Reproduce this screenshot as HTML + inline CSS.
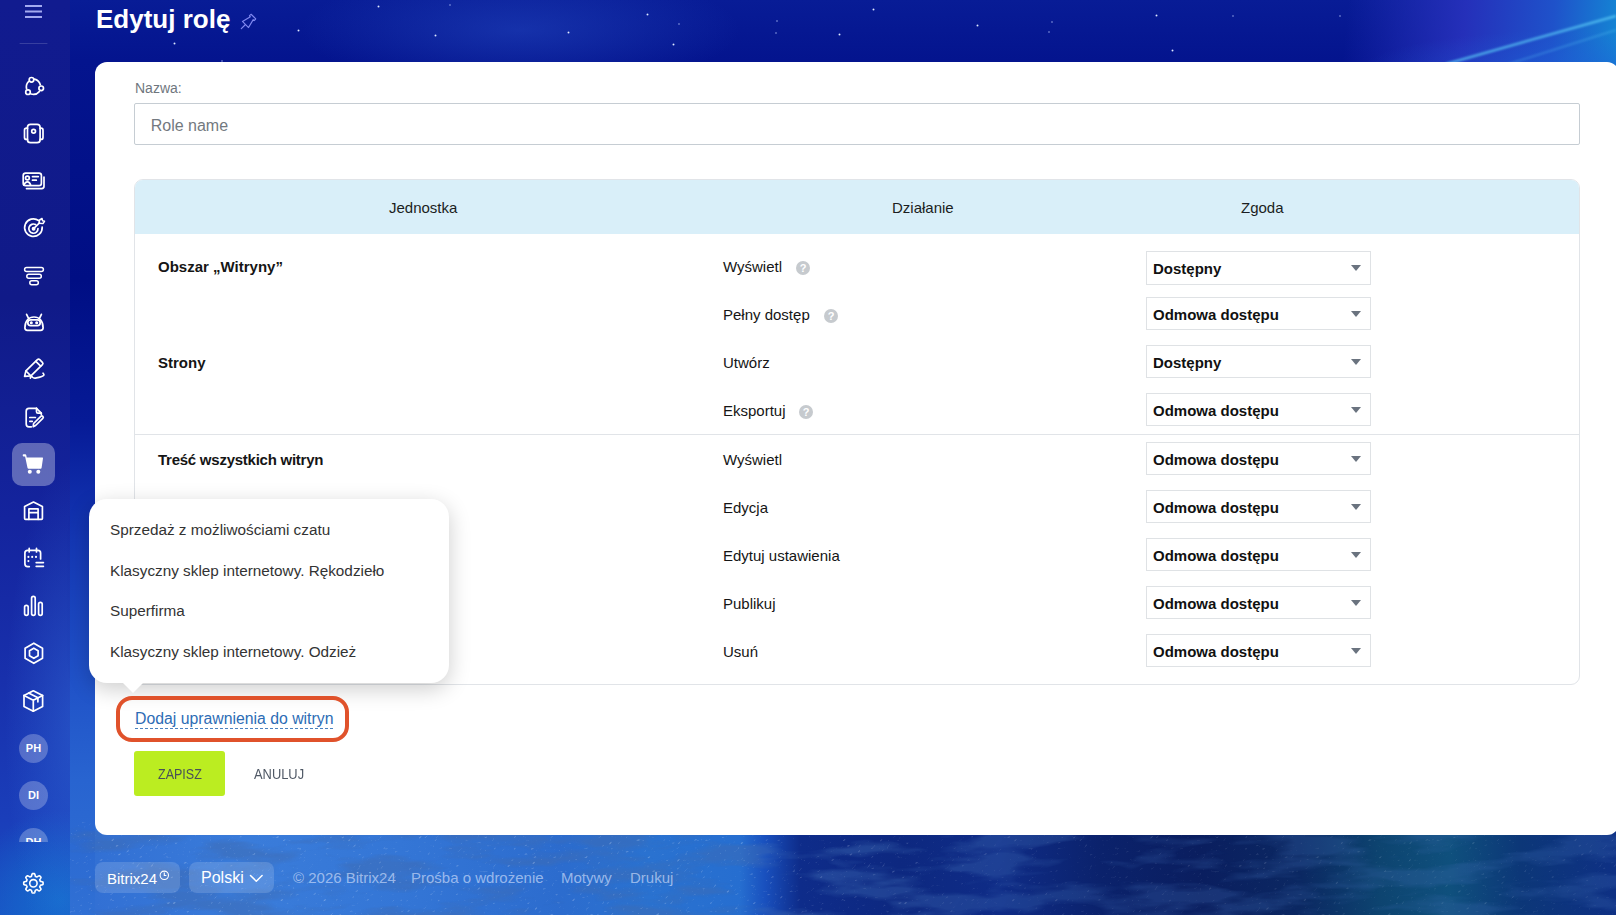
<!DOCTYPE html>
<html lang="pl">
<head>
<meta charset="utf-8">
<title>Edytuj rolę</title>
<style>
*{box-sizing:border-box;margin:0;padding:0}
html,body{width:1616px;height:915px;overflow:hidden}
body{position:relative;font-family:"Liberation Sans",sans-serif;background:#0b168c;color:#151515}
.abs{position:absolute}
#bg{position:absolute;left:0;top:0;width:1616px;height:915px;
background:
 radial-gradient(ellipse 220px 60px at 520px 30px, rgba(40,80,200,.45), rgba(40,80,200,0)),
 linear-gradient(to bottom, rgb(8,28,150) 0px, rgb(4,20,142) 60px, rgb(0,14,132) 280px, rgb(6,26,150) 420px, rgb(20,55,180) 540px, rgb(30,78,198) 660px, rgb(40,100,208) 780px, rgb(48,112,212) 915px);
}
#tr{position:absolute;left:1200px;top:0;width:416px;height:80px;
background:
 radial-gradient(ellipse 220px 40px at 380px 70px, rgba(30,95,215,.55), rgba(30,95,215,0)),
 linear-gradient(95deg, rgba(15,25,150,0) 0%, rgba(15,25,150,0) 35%, rgba(40,50,190,.9) 63%, rgba(32,85,205,.95) 84%, rgba(20,135,212,1) 100%)}
#bot{position:absolute;left:95px;top:822px;width:1521px;height:93px;
background:linear-gradient(90deg, rgb(50, 112, 212) 0px, rgb(58, 124, 218) 155px, rgb(52, 118, 214) 305px, rgb(44, 108, 206) 465px, rgb(42, 114, 208) 555px, rgb(38, 110, 208) 645px, rgb(25, 80, 190) 670px, rgb(14, 44, 138) 705px, rgb(13, 40, 128) 805px, rgb(15, 44, 135) 905px, rgb(11, 34, 108) 1005px, rgb(10, 30, 95) 1105px, rgb(11, 40, 98) 1205px, rgb(13, 68, 112) 1285px, rgb(15, 80, 125) 1355px, rgb(12, 55, 120) 1425px, rgb(14, 48, 132) 1521px)}
#side{position:absolute;left:0;top:0;width:70px;height:915px;
background:
 radial-gradient(ellipse 70px 260px at 75px 720px, rgba(55,120,225,.4), rgba(55,120,225,0)),
 radial-gradient(ellipse 90px 90px at 60px 900px, rgba(20,120,210,.7), rgba(20,120,210,0)),
 linear-gradient(to bottom, rgb(17,27,143) 0px, rgb(16,26,136) 300px, rgb(20,36,158) 520px, rgb(24,48,172) 680px, rgb(26,62,186) 820px, rgb(25,80,195) 915px)}
.star{position:absolute;width:3px;height:3px;border-radius:50%;background:radial-gradient(circle,rgba(240,245,255,.95) 0,rgba(200,215,255,.5) 45%,rgba(200,215,255,0) 75%)}
.star.s{width:2px;height:2px;background:rgba(190,205,255,.45)}
.ico{position:absolute;left:23px;width:22px;height:22px}
.ico svg{width:22px;height:22px;display:block;overflow:visible}
.av{position:absolute;left:19px;width:29px;height:29px;border-radius:50%;background:rgba(255,255,255,.25);color:#fff;font-weight:700;font-size:11px;text-align:center;line-height:29px}
#title{position:absolute;left:96px;top:1.5px;font-size:26px;font-weight:700;color:#fff;line-height:34px;letter-spacing:0}
#card{position:absolute;left:95px;top:62px;width:1524px;height:773px;background:#fff;border-radius:12px}
.lbl{position:absolute;font-size:14px;color:#6f767e;line-height:16px}
#inp{position:absolute;left:134px;top:103px;width:1446px;height:42px;border:1px solid #c6cdd3;border-radius:2px;background:#fff}
#inp span{position:absolute;left:15.7px;top:11.8px;font-size:16px;color:#737980;line-height:20px}
#tbl{position:absolute;left:134px;top:179px;width:1446px;height:506px;border:1px solid #e1e4e8;border-radius:9px;overflow:hidden}
#thead{position:absolute;left:0;top:0;width:100%;height:54px;background:#d9eff9}
.th{position:absolute;top:19px;font-size:15px;color:#1b1e22;line-height:18px}
.unit{position:absolute;font-size:15px;font-weight:700;color:#151515;line-height:18px}
.act{position:absolute;font-size:15px;color:#151515;line-height:18px}
.help{position:absolute;width:14px;height:14px;border-radius:50%;background:#c6cace;color:#fff;font-size:11px;font-weight:700;text-align:center;line-height:15px;margin-top:.5px}
.sel{position:absolute;left:1146px;width:225px;height:33px;border:1px solid #dfe2e5;background:#fff}
.sel span{position:absolute;left:6px;top:8px;font-size:15px;font-weight:700;color:#111;line-height:18px}
.sel i{position:absolute;right:9px;top:13px;width:0;height:0;border-left:5.5px solid transparent;border-right:5.5px solid transparent;border-top:6px solid #6a737f}
#pop{position:absolute;left:89px;top:499px;width:360px;height:184px;background:#fff;border-radius:18px;box-shadow:0 6px 22px rgba(0,0,0,.2)}
.pi{position:absolute;left:21px;font-size:15.3px;color:#333;line-height:18px}
#arrow{position:absolute;left:122px;top:682px;width:0;height:0;border-left:11px solid transparent;border-right:11px solid transparent;border-top:11px solid #fff}
#red{position:absolute;left:116px;top:696px;width:233px;height:46px;border:4px solid #e0522b;border-radius:16px}
#link{position:absolute;left:135px;top:709px;font-size:15.8px;color:#2d6cb5;line-height:19px;border-bottom:1px dashed #4a82c0;padding-bottom:0}
#save{position:absolute;left:134px;top:751px;width:91px;height:45px;background:#bbed21;border-radius:3px;color:#4a5058}
#save span{position:absolute;left:24px;top:14px;font-size:14px;line-height:18px;transform:scaleX(.895);transform-origin:0 0;white-space:nowrap}
#cancel{position:absolute;left:254px;top:765px;font-size:14px;color:#4f5865;line-height:18px;transform:scaleX(.92);transform-origin:0 0;white-space:nowrap}
.fbtn{position:absolute;top:862px;height:31px;border-radius:8px;background:rgba(255,255,255,.15);color:#fff}
.flink{position:absolute;top:869px;font-size:15px;color:rgba(220,230,255,.62);line-height:18px}
</style>
</head>
<body>
<div id="bg"></div>
<div id="tr"></div>
<svg class="abs" style="left:1250px;top:0" width="366" height="80" viewBox="0 0 366 80"><defs><filter id="bl" x="-20%" y="-50%" width="140%" height="200%"><feGaussianBlur stdDeviation="1.2"/></filter></defs>
<path d="M196 64L366 16" stroke="rgba(90,200,245,.75)" stroke-width="2.4" filter="url(#bl)"/>
<path d="M240 70L366 30" stroke="rgba(90,200,245,.3)" stroke-width="2" filter="url(#bl)"/>
</svg>
<div id="bot"></div>
<svg class="abs" style="left:70px;top:822px" width="1546" height="93" viewBox="0 0 1546 93">
 <defs>
  <filter id="tx" x="0" y="0" width="100%" height="100%">
   <feTurbulence type="fractalNoise" baseFrequency="0.01 0.045" numOctaves="4" seed="7" result="n"/>
   <feColorMatrix in="n" type="matrix" values="0 0 0 0 0.05  0 0 0 0 0.15  0 0 0 0 0.45  -5 0 0 0 2.75" result="dark"/>
  </filter>
  <filter id="tx2" x="0" y="0" width="100%" height="100%">
   <feTurbulence type="fractalNoise" baseFrequency="0.35 0.35" numOctaves="1" seed="3" result="n"/>
   <feColorMatrix in="n" type="matrix" values="0 0 0 0 0.8  0 0 0 0 0.88  0 0 0 0 1  0 0 0 6 -3.9"/>
  </filter>
  <linearGradient id="txm" x1="0" x2="1" y1="0" y2="0"><stop offset="0" stop-color="#fff" stop-opacity=".9"/><stop offset=".45" stop-color="#fff" stop-opacity=".8"/><stop offset=".6" stop-color="#fff" stop-opacity=".5"/><stop offset="1" stop-color="#fff" stop-opacity=".4"/></linearGradient>
  <mask id="mk" maskUnits="userSpaceOnUse" x="-200" y="0" width="2000" height="93"><rect x="-200" width="2000" height="93" fill="url(#txm)"/></mask>
 </defs>
 <g mask="url(#mk)" transform="skewX(-35)">
  <rect x="0" y="0" width="1700" height="93" filter="url(#tx)" opacity=".6"/>
  <rect x="0" y="0" width="1700" height="93" filter="url(#tx2)" opacity=".35"/>
 </g>
</svg>
<div id="side"></div>
<div class="star" style="left:173px;top:42px"></div>
<div class="star" style="left:297px;top:29px"></div>
<div class="star" style="left:377px;top:5px"></div>
<div class="star s" style="left:449px;top:4px"></div>
<div class="star" style="left:434px;top:34px"></div>
<div class="star" style="left:567px;top:31px"></div>
<div class="star" style="left:646px;top:13px"></div>
<div class="star" style="left:672px;top:43px"></div>
<div class="star s" style="left:678px;top:23px"></div>
<div class="star s" style="left:776px;top:20px"></div>
<div class="star s" style="left:775px;top:32px"></div>
<div class="star" style="left:838px;top:33px"></div>
<div class="star" style="left:872px;top:8px"></div>
<div class="star" style="left:976px;top:24px"></div>
<div class="star s" style="left:1051px;top:21px"></div>
<div class="star s" style="left:1048px;top:31px"></div>
<div class="star" style="left:1155px;top:14px"></div>
<div class="star" style="left:1171px;top:49px"></div>
<div class="star s" style="left:1232px;top:15px"></div>
<div class="star s" style="left:1339px;top:15px"></div>
<div class="star s" style="left:221px;top:60px"></div>

<!-- hamburger -->
<svg class="abs" style="left:0;top:0" width="70" height="915" viewBox="0 0 70 915" fill="none" stroke="#fff" stroke-width="1.7" stroke-linecap="round" stroke-linejoin="round">
 <g stroke="#a3aaf0" stroke-width="2" stroke-linecap="butt"><path d="M25 6.1H42M25 11.5H42M25 17H42"/></g>
 <path d="M20 43.5H47" stroke="rgba(255,255,255,.16)" stroke-width="1"/>
 <!-- 1 dashed circle nodes -->
 <g>
  <path d="M28.6 81.5A8 8 0 0 0 26.6 89"/>
  <path d="M34.5 79.2A8 8 0 0 1 40.3 84.8"/>
  <path d="M39.3 91.6A8 8 0 0 1 31 94"/>
  <circle cx="31.5" cy="79.8" r="2.3"/><circle cx="41.2" cy="88.3" r="2.3"/><circle cx="28" cy="92.2" r="2.3"/>
 </g>
 <!-- 2 phone -->
 <g>
  <rect x="27.5" y="124.3" width="12.6" height="18.4" rx="3"/>
  <path d="M27.5 128.2H26.5Q24.5 128.2 24.5 130.2V137.4Q24.5 139.4 26.5 139.4H27.5"/>
  <path d="M40.1 128.2H41Q43 128.2 43 130.2V137.4Q43 139.4 41 139.4H40.1"/>
  <circle cx="33.6" cy="131.3" r="1.9"/>
 </g>
 <!-- 3 contact card -->
 <g>
  <rect x="23.2" y="173.1" width="18.2" height="12.6" rx="2.4"/>
  <path d="M44 177V186.3Q44 188.6 41.7 188.6H26.5"/>
  <circle cx="27.4" cy="178" r="1.9"/>
  <path d="M24 185Q25 181.8 27.4 181.8Q29.8 181.8 30.6 185"/>
  <path d="M32.5 176.6H38.3M32.5 180.2H36.3"/>
 </g>
 <!-- 4 target -->
 <g>
  <path d="M38.6 220.5A8.8 8.8 0 1 0 42.2 227"/>
  <path d="M35.6 224.6A4.6 4.6 0 1 0 38 228.5"/>
  <circle cx="33.6" cy="228.7" r="1.1" fill="#fff"/>
  <path d="M33.6 228.7L39.5 222.8"/>
  <path d="M39 223.3L39.6 220L42 218.5L42.5 220.7L44.5 221.3L43 223.6Z" stroke-width="1.5"/>
 </g>
 <!-- 5 funnel -->
 <g>
  <rect x="24.6" y="267.6" width="18.8" height="4" rx="2" stroke-width="1.5"/>
  <rect x="26.8" y="274.2" width="14.5" height="4" rx="2" stroke-width="1.5"/>
  <rect x="29.8" y="280.7" width="8.5" height="4" rx="2" stroke-width="1.5"/>
 </g>
 <!-- 6 robot -->
 <g>
  <path d="M24.9 327.8C24.9 320.8 28.8 317 34 317C39.2 317 43.1 320.8 43.1 327.8C43.1 329.5 42.3 330.3 40.6 330.3H27.4C25.7 330.3 24.9 329.5 24.9 327.8Z"/>
  <path d="M28.3 317.9L26.6 314.3M39.7 317.9L41.4 314.3"/>
  <rect x="27.8" y="319.9" width="12.4" height="5.8" rx="2.9"/>
  <circle cx="31.3" cy="322.8" r=".7" fill="#fff"/><circle cx="36.7" cy="322.8" r=".7" fill="#fff"/>
 </g>
 <!-- 7 pen -->
 <g>
  <path d="M24.6 376.4L25.9 370.9L37.4 359.6Q38.6 358.5 39.7 359.6L42.4 362.3Q43.5 363.4 42.4 364.6L30.9 375.9Z"/>
  <path d="M35.8 361.3L40.7 366.2M26 371L30.5 375.6"/>
  <path d="M30.3 378Q31.4 375.8 32.6 377.3Q33.7 378.6 36.4 377.9Q42 377 43.7 375.4Q44.4 374.4 43 373.2"/>
 </g>
 <!-- 8 doc pen -->
 <g>
  <path d="M36.5 408.4H29Q26.2 408.4 26.2 411.2V424Q26.2 426.8 29 426.8H31.3"/>
  <path d="M36.5 408.4L41.3 413.2V414.5"/>
  <path d="M36.5 408.4V411.8Q36.5 413.2 37.9 413.2H41.3"/>
  <path d="M29.8 417.5H35.4M29.8 421.3H32.3"/>
  <path d="M33.2 426.7L33.6 423.5L40.8 416.3Q41.8 415.3 42.8 416.3Q43.8 417.3 42.8 418.3L35.6 425.5Z"/>
 </g>
 <!-- 9 cart active -->
 <rect x="12" y="443" width="43" height="43" rx="10" fill="rgba(255,255,255,.32)" stroke="none"/>
 <g stroke="none" fill="#fff">
  <path d="M23.5 454.3H25.2Q26.1 454.3 26.3 455.2L26.7 457.5H42.4Q43.2 457.5 43 458.3L41.6 467.8Q41.5 468.7 40.6 468.7H28.6Q27.7 468.7 27.5 467.8L25.1 456.4H23.5Q22.7 456.4 22.7 455.3Q22.7 454.3 23.5 454.3Z"/>
  <circle cx="29.8" cy="471.8" r="2"/><circle cx="38.3" cy="471.8" r="2"/>
 </g>
 <!-- 10 warehouse -->
 <g>
  <path d="M25.5 519.3Q24.6 519.3 24.6 518.4V506.5L33.5 502.1L42.4 506.5V518.4Q42.4 519.3 41.5 519.3Z"/>
  <path d="M28.9 519.3V508.9H38.1V519.3M28.9 512.7H38.1"/>
 </g>
 <!-- 11 calendar -->
 <g>
  <path d="M40.6 559V553Q40.6 550.3 38 550.3H27.6Q24.9 550.3 24.9 553V563.8Q24.9 566.6 27.6 566.6H29.3"/>
  <path d="M29.2 548.3V552M36.5 548.3V552"/>
  <circle cx="28.4" cy="556.9" r="1.05" fill="#fff" stroke="none"/><circle cx="32.2" cy="556.9" r="1.05" fill="#fff" stroke="none"/><circle cx="36" cy="556.9" r="1.05" fill="#fff" stroke="none"/>
  <circle cx="28.4" cy="561.1" r="1.05" fill="#fff" stroke="none"/>
  <path d="M36.2 562.6H43.4M36.2 566.3H43.4"/>
 </g>
 <!-- 12 bars -->
 <g>
  <rect x="24.6" y="605.3" width="3.6" height="10" rx="1.8"/>
  <rect x="31.6" y="596.4" width="3.6" height="18.9" rx="1.8"/>
  <rect x="38.6" y="602.3" width="3.6" height="13" rx="1.8"/>
 </g>
 <!-- 13 hexagon -->
 <g>
  <path d="M33.8 643.2L42.5 648.2V658.3L33.8 663.3L25.1 658.3V648.2Z"/>
  <path d="M33.8 648.2L38.1 650.7V655.8L33.8 658.3L29.5 655.8V650.7Z"/>
 </g>
 <!-- 14 box -->
 <g>
  <path d="M33.3 690.8L42.6 695.5V706.5L33.3 711.2L24 706.5V695.5Z"/>
  <path d="M24 695.5L33.3 700.2L42.6 695.5M33.3 700.2V711.2"/>
  <path d="M28.6 693.1L37.9 697.8V701.8"/>
 </g>
 <!-- settings -->
 <g>
  <path d="M43.10 883.30L43.10 883.55L43.09 883.81L43.07 884.06L43.05 884.31L42.89 884.55L42.43 884.73L41.94 884.88L41.44 885.01L40.94 885.11L40.48 885.20L40.30 885.34L40.25 885.52L40.19 885.70L40.12 885.88L40.05 886.06L39.98 886.23L39.90 886.40L39.82 886.57L39.73 886.74L39.74 886.96L40.01 887.35L40.29 887.77L40.56 888.22L40.80 888.68L41.00 889.13L40.94 889.40L40.78 889.60L40.61 889.79L40.44 889.98L40.26 890.16L40.08 890.34L39.89 890.51L39.70 890.68L39.50 890.84L39.23 890.90L38.78 890.70L38.32 890.46L37.87 890.19L37.45 889.91L37.06 889.64L36.84 889.63L36.67 889.72L36.50 889.80L36.33 889.88L36.16 889.95L35.98 890.02L35.80 890.09L35.62 890.15L35.44 890.20L35.30 890.38L35.21 890.84L35.11 891.34L34.98 891.84L34.83 892.33L34.65 892.79L34.41 892.95L34.16 892.97L33.91 892.99L33.65 893.00L33.40 893.00L33.15 893.00L32.89 892.99L32.64 892.97L32.39 892.95L32.15 892.79L31.97 892.33L31.82 891.84L31.69 891.34L31.59 890.84L31.50 890.38L31.36 890.20L31.18 890.15L31.00 890.09L30.82 890.02L30.64 889.95L30.47 889.88L30.30 889.80L30.13 889.72L29.96 889.63L29.74 889.64L29.35 889.91L28.93 890.19L28.48 890.46L28.02 890.70L27.57 890.90L27.30 890.84L27.10 890.68L26.91 890.51L26.72 890.34L26.54 890.16L26.36 889.98L26.19 889.79L26.02 889.60L25.86 889.40L25.80 889.13L26.00 888.68L26.24 888.22L26.51 887.77L26.79 887.35L27.06 886.96L27.07 886.74L26.98 886.57L26.90 886.40L26.82 886.23L26.75 886.06L26.68 885.88L26.61 885.70L26.55 885.52L26.50 885.34L26.32 885.20L25.86 885.11L25.36 885.01L24.86 884.88L24.37 884.73L23.91 884.55L23.75 884.31L23.73 884.06L23.71 883.81L23.70 883.55L23.70 883.30L23.70 883.05L23.71 882.79L23.73 882.54L23.75 882.29L23.91 882.05L24.37 881.87L24.86 881.72L25.36 881.59L25.86 881.49L26.32 881.40L26.50 881.26L26.55 881.08L26.61 880.90L26.68 880.72L26.75 880.54L26.82 880.37L26.90 880.20L26.98 880.03L27.07 879.86L27.06 879.64L26.79 879.25L26.51 878.83L26.24 878.38L26.00 877.92L25.80 877.47L25.86 877.20L26.02 877.00L26.19 876.81L26.36 876.62L26.54 876.44L26.72 876.26L26.91 876.09L27.10 875.92L27.30 875.76L27.57 875.70L28.02 875.90L28.48 876.14L28.93 876.41L29.35 876.69L29.74 876.96L29.96 876.97L30.13 876.88L30.30 876.80L30.47 876.72L30.64 876.65L30.82 876.58L31.00 876.51L31.18 876.45L31.36 876.40L31.50 876.22L31.59 875.76L31.69 875.26L31.82 874.76L31.97 874.27L32.15 873.81L32.39 873.65L32.64 873.63L32.89 873.61L33.15 873.60L33.40 873.60L33.65 873.60L33.91 873.61L34.16 873.63L34.41 873.65L34.65 873.81L34.83 874.27L34.98 874.76L35.11 875.26L35.21 875.76L35.30 876.22L35.44 876.40L35.62 876.45L35.80 876.51L35.98 876.58L36.16 876.65L36.33 876.72L36.50 876.80L36.67 876.88L36.84 876.97L37.06 876.96L37.45 876.69L37.87 876.41L38.32 876.14L38.78 875.90L39.23 875.70L39.50 875.76L39.70 875.92L39.89 876.09L40.08 876.26L40.26 876.44L40.44 876.62L40.61 876.81L40.78 877.00L40.94 877.20L41.00 877.47L40.80 877.92L40.56 878.38L40.29 878.83L40.01 879.25L39.74 879.64L39.73 879.86L39.82 880.03L39.90 880.20L39.98 880.37L40.05 880.54L40.12 880.72L40.19 880.90L40.25 881.08L40.30 881.26L40.48 881.40L40.94 881.49L41.44 881.59L41.94 881.72L42.43 881.87L42.89 882.05L43.05 882.29L43.07 882.54L43.09 882.79L43.10 883.05Z" stroke-width="1.6"/>
  <circle cx="33.4" cy="883.3" r="3.7" stroke-width="1.6"/>
 </g>
</svg>
<div class="av" style="top:734px">PH</div>
<div class="av" style="top:781px">DI</div>
<div class="abs" style="left:0;top:828px;width:70px;height:14px;overflow:hidden"><div class="av" style="top:0">DH</div></div>

<div id="title">Edytuj rolę</div>
<svg class="abs" style="left:236px;top:10px" width="24" height="24" viewBox="236 10 24 24" fill="none" stroke="#8189f0" stroke-width="1.15" stroke-linejoin="round" stroke-linecap="round">
 <path d="M241.3 28.7L245.5 24.5"/>
 <path d="M242.46 21.46L250.38 16.79L249.46 15.87Q250.3 14.5 251.09 14.25L255.75 18.91Q255.5 19.7 254.13 20.54L253.21 19.62L248.54 27.54Z"/>
</svg>

<div id="card"></div>
<div class="lbl" style="left:135px;top:80px">Nazwa:</div>
<div id="inp"><span>Role name</span></div>

<div id="tbl">
  <div id="thead"></div>
  <div class="abs" style="left:0;top:254px;width:100%;height:1px;background:#e1e4e8"></div>
</div>
<div class="th" style="left:389px;top:199px">Jednostka</div>
<div class="th" style="left:892px;top:199px">Działanie</div>
<div class="th" style="left:1241px;top:199px">Zgoda</div>

<div class="unit" style="left:158px;top:258px">Obszar „Witryny”</div>
<div class="unit" style="left:158px;top:354px">Strony</div>
<div class="unit" style="left:158px;top:451px;letter-spacing:-.25px">Treść wszystkich witryn</div>

<div class="act" style="left:723px;top:258px">Wyświetl</div>
<div class="help" style="left:796px;top:260px">?</div>
<div class="act" style="left:723px;top:306px">Pełny dostęp</div>
<div class="help" style="left:824px;top:308px">?</div>
<div class="act" style="left:723px;top:354px">Utwórz</div>
<div class="act" style="left:723px;top:402px">Eksportuj</div>
<div class="help" style="left:799px;top:404px">?</div>
<div class="act" style="left:723px;top:451px">Wyświetl</div>
<div class="act" style="left:723px;top:499px">Edycja</div>
<div class="act" style="left:723px;top:547px">Edytuj ustawienia</div>
<div class="act" style="left:723px;top:595px">Publikuj</div>
<div class="act" style="left:723px;top:643px">Usuń</div>

<div class="sel" style="top:251px;height:34px"><span>Dostępny</span><i></i></div>
<div class="sel" style="top:297px"><span>Odmowa dostępu</span><i></i></div>
<div class="sel" style="top:345px"><span>Dostępny</span><i></i></div>
<div class="sel" style="top:393px"><span>Odmowa dostępu</span><i></i></div>
<div class="sel" style="top:442px"><span>Odmowa dostępu</span><i></i></div>
<div class="sel" style="top:490px"><span>Odmowa dostępu</span><i></i></div>
<div class="sel" style="top:538px"><span>Odmowa dostępu</span><i></i></div>
<div class="sel" style="top:586px"><span>Odmowa dostępu</span><i></i></div>
<div class="sel" style="top:634px"><span>Odmowa dostępu</span><i></i></div>

<div id="pop">
  <div class="pi" style="top:22px">Sprzedaż z możliwościami czatu</div>
  <div class="pi" style="top:63px">Klasyczny sklep internetowy. Rękodzieło</div>
  <div class="pi" style="top:103px">Superfirma</div>
  <div class="pi" style="top:144px">Klasyczny sklep internetowy. Odzież</div>
</div>
<div id="arrow"></div>

<div id="red"></div>
<div id="link">Dodaj uprawnienia do witryn</div>
<div id="save"><span>ZAPISZ</span></div>
<div id="cancel">ANULUJ</div>

<!-- footer -->
<div class="fbtn" style="left:95px;width:85px"><span class="abs" style="left:12px;top:7.5px;font-size:15px;line-height:18px">Bitrix24</span><svg class="abs" style="left:64px;top:8px" width="11" height="11" viewBox="0 0 11 11" fill="none" stroke="#fff" stroke-width="1.1"><circle cx="5.3" cy="5.3" r="4.2"/><path d="M5.3 2.6V5.5H7.4"/></svg></div>
<div class="fbtn" style="left:189px;width:85px"><span class="abs" style="left:12px;top:6px;font-size:16px;line-height:19px">Polski</span><svg class="abs" style="left:60px;top:12px" width="15" height="9" viewBox="0 0 15 9" fill="none" stroke="#fff" stroke-width="1.5" stroke-linecap="round" stroke-linejoin="round"><path d="M1.5 1.5L7.3 7.2L13.1 1.5"/></svg></div>
<div class="flink" style="left:293px">© 2026 Bitrix24</div>
<div class="flink" style="left:411px">Prośba o wdrożenie</div>
<div class="flink" style="left:561px">Motywy</div>
<div class="flink" style="left:630px">Drukuj</div>

</body>
</html>
